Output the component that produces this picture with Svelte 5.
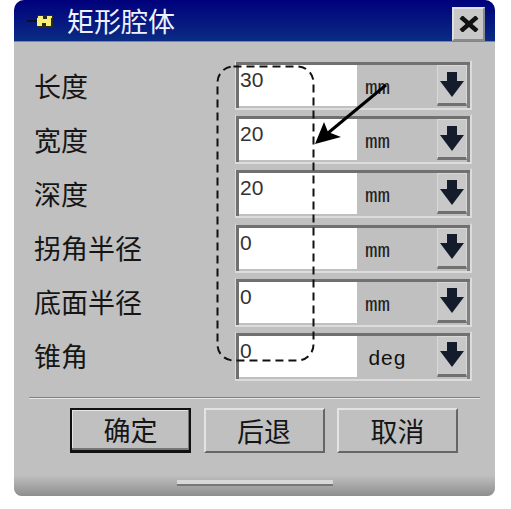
<script>
  const rows = [
    { label: "长度", value: "30", unit: "mm" },
    { label: "宽度", value: "20", unit: "mm" },
    { label: "深度", value: "20", unit: "mm" },
    { label: "拐角半径", value: "0", unit: "mm" },
    { label: "底面半径", value: "0", unit: "mm" },
    { label: "锥角", value: "0", unit: "deg" },
  ];
  const actions = [
    { label: "确定", primary: true },
    { label: "后退", primary: false },
    { label: "取消", primary: false },
  ];
</script>

<div class="page">
  <div class="window">
    <header class="titlebar">
      <svg class="pin" width="26" height="18" viewBox="0 0 26 18" aria-hidden="true">
        <path d="M0 9h11" stroke="#111" stroke-width="2" />
        <rect x="10" y="3" width="16" height="13" fill="#2c2c14" />
        <path d="M11 4h5v3h4V4h5v2h-1v8h-5v-3h-4v3h-5V6h1V4z" fill="#f6f07a" />
      </svg>
      <span class="title">矩形腔体</span>
      <button class="close" type="button" aria-label="Close">
        <svg width="20" height="16" viewBox="0 0 20 16" aria-hidden="true">
          <path d="M2 1l16 14M18 1L2 15" stroke="#111" stroke-width="4.5" />
        </svg>
      </button>
    </header>

    <div class="form">
      {#each rows as row}
        <div class="row">
          <span class="label">{row.label}</span>
          <div class="field">
            <div class="value">{row.value}</div>
            <div class="unit" class:deg={row.unit === "deg"}>{row.unit}</div>
            <button class="drop" type="button" aria-label="Open">
              <svg width="26" height="26" viewBox="0 0 26 26" aria-hidden="true">
                <path d="M8 0h10v9h7L13 25 1 9h7z" fill="#141c2c" />
              </svg>
            </button>
          </div>
        </div>
      {/each}
    </div>

    <div class="separator"></div>

    <div class="actions">
      {#each actions as action}
        <button class="action" class:primary={action.primary} type="button">{action.label}</button>
      {/each}
    </div>

    <div class="footer">
      <div class="grip"></div>
    </div>
  </div>

  <svg class="overlay" width="511" height="509" viewBox="0 0 511 509" aria-hidden="true">
    <rect x="217.5" y="66.5" width="96" height="294" rx="16" fill="none" stroke="#111" stroke-width="2" stroke-dasharray="8 5" />
    <path d="M386 85L328 133" stroke="#000" stroke-width="3" />
    <path d="M315 144L324 122 328 132 341 137z" fill="#000" />
  </svg>
</div>

<style>
  :global(body) {
    background: #fff;
  }

  .page {
    position: relative;
    width: 511px;
    height: 509px;
    overflow: hidden;
  }

  .window {
    margin-left: 14px;
    width: 481px;
    height: 496px;
    display: flex;
    flex-direction: column;
    background: #c0c0c0;
    border-radius: 10px 10px 8px 8px;
    overflow: hidden;
    font-family: "Noto Sans CJK SC", sans-serif;
    color: #111;
  }

  .titlebar {
    flex: none;
    height: 42px;
    display: flex;
    align-items: center;
    padding-left: 13px;
    padding-right: 10px;
    background: linear-gradient(#00007c, #0a2c84);
    border-bottom: 1px solid #6f86b8;
    box-sizing: border-box;
  }

  .title {
    margin-left: 14px;
    font-size: 27px;
    line-height: 1;
    color: #eef2ff;
  }

  .close {
    margin-left: auto;
    width: 33px;
    height: 34px;
    margin-top: 6px;
    padding: 0;
    display: flex;
    align-items: center;
    justify-content: center;
    background: #c8c8c8;
    border: 2px solid;
    border-color: #e0e0e0 #8a8a8a #8a8a8a #e0e0e0;
  }

  .form {
    flex: none;
    display: flex;
    flex-direction: column;
    gap: 4.2px;
    padding: 18px 0 0 20px;
  }

  .row {
    display: flex;
    align-items: center;
    height: 50px;
  }

  .label {
    width: 201px;
    font-size: 27px;
    line-height: 1;
    color: #161616;
  }

  .field {
    width: 237px;
    height: 50px;
    box-sizing: border-box;
    display: flex;
    padding: 3px 3px 2px 3px;
    background: #c0c0c0;
    border: 2px solid #dcdcdc;
    border-left-width: 1px;
    border-top-color: #c0c0c0;
    box-shadow: inset 3px 3px 0 #707070, inset -3px 0 0 #808080;
  }

  .value {
    width: 118px;
    height: 41px;
    background: #fff;
    font-family: "Liberation Sans", sans-serif;
    font-size: 21px;
    line-height: 24px;
    padding: 3px 0 0 1px;
    box-sizing: border-box;
    color: #333;
  }

  .unit {
    flex: 1;
    padding: 12px 0 0 8px;
    font-family: "Liberation Mono", monospace;
    font-size: 21px;
    line-height: 24px;
    color: #222;
  }

  .unit.deg {
    padding-left: 11px;
    color: #111;
  }

  .drop {
    width: 30px;
    height: 41px;
    padding: 0;
    display: flex;
    align-items: center;
    justify-content: center;
    background: #c8c8c8;
    border: 1px solid #d8d8d8;
    border-bottom: 3px solid #707070;
  }

  .separator {
    flex: none;
    margin: 16px 15px 0;
    height: 1px;
    background: #808080;
    border-bottom: 1px solid #e8e8e8;
  }

  .actions {
    flex: none;
    display: flex;
    gap: 12.5px;
    padding: 9px 0 0 56px;
  }

  .action {
    width: 121px;
    height: 45px;
    padding: 0;
    box-sizing: border-box;
    font-family: inherit;
    font-size: 27px;
    line-height: 1;
    color: #161616;
    background: #c0c0c0;
    border: 2px solid;
    border-color: #e4e4e4 #666 #666 #e4e4e4;
  }

  .action.primary {
    border: 2px solid #111;
    border-bottom-width: 3px;
    box-shadow: inset -1px -2px 0 #777, inset 1px 1px 0 #e4e4e4;
  }

  .footer {
    flex: 1;
    display: flex;
    justify-content: center;
    align-items: flex-end;
    padding-bottom: 10px;
    background: linear-gradient(#c0c0c0 0 22px, #8e8e8e);
  }

  .grip {
    width: 156px;
    height: 4px;
    background: #d8d8d8;
    border-bottom: 2px solid #777;
  }

  .overlay {
    position: absolute;
    inset: 0;
    pointer-events: none;
  }
</style>
